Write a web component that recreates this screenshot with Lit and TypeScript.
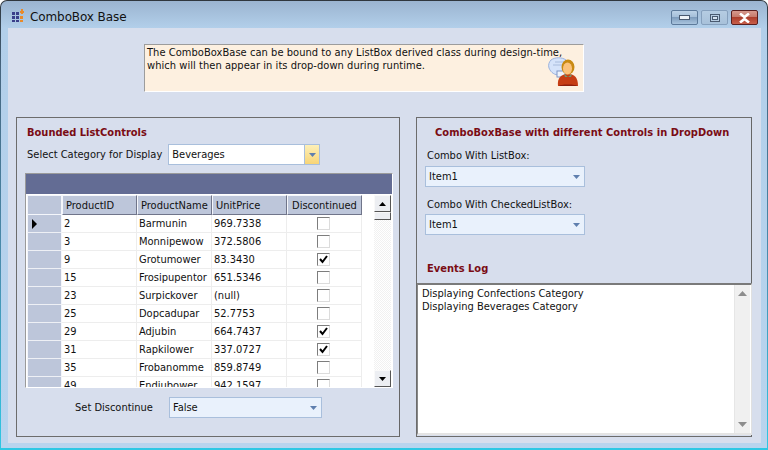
import { LitElement, html, css, svg } from "lit";
import { customElement } from "lit/decorators.js";

const rows: [string, string, string, boolean][] = [
  ["2", "Barmunin", "969.7338", false],
  ["3", "Monnipewow", "372.5806", false],
  ["9", "Grotumower", "83.3430", true],
  ["15", "Frosipupentor", "651.5346", false],
  ["23", "Surpickover", "(null)", false],
  ["25", "Dopcadupar", "52.7753", false],
  ["29", "Adjubin", "664.7437", true],
  ["31", "Rapkilower", "337.0727", true],
  ["35", "Frobanomme", "859.8749", false],
  ["49", "Endiubower", "942.1597", false],
];

const arrow = svg`<svg width="7" height="4" viewBox="0 0 7 4"><path d="M0 0h7L3.500 4z" fill="#5f7fae"/></svg>`;

@customElement("app-root")
export class AppRoot extends LitElement {
  static styles = css`
    :host { display: block; width: 768px; height: 450px; overflow: hidden; background: #fff; font-family: "DejaVu Sans Condensed", "DejaVu Sans", sans-serif; font-size: 11px; color: #111; }
    .window { box-sizing: border-box; width: 768px; height: 450px; padding: 1px 1px 2px 1px; border-radius: 7px 7px 0 0; background: linear-gradient(#2f363d 0, #46657f 15%, #4a8fb0 60%, #2ec8e4 100%); }
    .frame { height: 100%; display: flex; flex-direction: column; border-radius: 6px 6px 0 0; background: linear-gradient(#9bb4d0 0, #b2cfea 27px, #b8d4ee 100%); overflow: hidden; }
    .title { box-sizing: border-box; flex: none; height: 27px; display: flex; align-items: center; padding: 2px 9px 0 11px; gap: 6px; }
    .title .text { flex: 1; color: #111; font-family: "DejaVu Sans", sans-serif; font-size: 12px; letter-spacing: -0.1px; padding-top: 2px; }
    .btns { display: flex; gap: 3px; align-self: flex-start; padding-top: 7px; }
    .btn { box-sizing: border-box; width: 27px; height: 15px; border: 1px solid #5d7a9b; border-radius: 2px; background: linear-gradient(#bcd2e7 0, #a5bfd9 45%, #7f9dbd 50%, #a9c4de 100%); display: flex; align-items: center; justify-content: center; }
    .btn.max { background: linear-gradient(#b5cce2 0, #a8c1da 100%); border-color: #86a0bd; }
    .btn.close { border-color: #5a1f1f; background: linear-gradient(#d79a8e 0, #c67a6b 45%, #ad3f2d 50%, #c85f4a 100%); }
    .outer { flex: 1; display: flex; margin: 0 6px 5px 7px; background: #d7deed; flex-direction: column; min-height: 0; }
    .banner { box-sizing: border-box; align-self: flex-start; margin: 16px 0 0 136px; width: 440px; height: 48px; background: #fdf0e0; border-top: 1px solid #9c9c9c; border-left: 1px solid #9c9c9c; border-right: 1px solid #fff; border-bottom: 1px solid #fff; padding: 1px 2px; line-height: 13px; letter-spacing: 0.05px; position: relative; }
    .banner svg { position: absolute; left: 402px; top: 12px; }
    .panels { display: flex; gap: 16px; margin: 25px 8px 0 8px; }
    .panel { box-sizing: border-box; height: 320px; border: 1px solid #6c6c6c; border-right-color: #666; position: relative; display: flex; flex-direction: column; }
    .left { width: 384px; padding: 0 6px 0 8px; }
    .right { width: 336px; padding: 0 0 0 8px; }
    h3 { margin: 0; font-size: 11px; line-height: 14px; color: #7a0c14; font-weight: 700; }
    .left h3 { padding: 8px 0 0 2px; }
    .right h3.top { padding: 8px 0 0 10px; letter-spacing: 0.05px; }
    .row { display: flex; align-items: center; }
    .sel-row { margin-top: 4px; height: 21px; gap: 6px; padding-left: 2px; }
    .combo { box-sizing: border-box; height: 21px; border: 1px solid #a9bfdc; background: #e9f1fc; display: flex; align-items: center; padding: 0 4px 0 3px; }
    .combo span { flex: 1; }
    .combo.white { background: #fff; width: 152px; padding: 0 0 0 3px; }
    .dd { align-self: stretch; width: 14px; background: linear-gradient(#fdf0b8, #f7d477); border-left: 1px solid #a9bfdc; display: flex; align-items: center; justify-content: center; }
    .combo .ar { display: flex; }
    .combo.wide { width: 160px; }
    .combo.set { width: 153px; }
    .grid { box-sizing: border-box; margin: 8px 0 0 0; width: 368px; height: 215px; border: 1px solid #9a9a9a; border-right-color: #fff; border-bottom-color: #fff; background: #fff; overflow: hidden; position: relative; }
    .cap { height: 20px; background: #636c94; }
    .body { display: grid; grid-template-columns: 36px 75px 75px 75px 75px 1fr; grid-template-rows: 20px; grid-auto-rows: 18px; padding-top: 1px; background: #fff; }
    .h { box-sizing: border-box; background: #bdc6da; border: 1px solid #f4f6fb; border-right-color: #70758a; border-bottom-color: #70758a; display: flex; align-items: center; padding-left: 3px; }
    .h.dc { justify-content: center; padding: 0; }
    .h.blank { border-color: #f4f6fb; margin-left: 1px; }
    .rh { background: #bdc6da; border: 1px solid #f4f6fb; border-top: none; margin-left: 1px; box-sizing: border-box; border-bottom: 1px solid #eef0f5; display: flex; align-items: center; padding-left: 3px; }
    .c { border-right: 1px solid #ededed; border-bottom: 1px solid #ededed; padding-left: 2px; display: flex; align-items: center; box-sizing: border-box; color: #111; }
    .c.ck { justify-content: center; padding: 0 1px 0 0; }
    .cb { box-sizing: border-box; width: 13px; height: 13px; border: 1px solid #7d7d7d; border-right-color: #dcdcdc; border-bottom-color: #dcdcdc; display: flex; background: #fff; }
    .hole { background: #fff; }
    .sb { position: absolute; left: 348px; top: 21px; width: 17px; height: 192px; display: flex; flex-direction: column; background: repeating-conic-gradient(#f1f1f1 0 25%, #fff 0 50%) 0 0 / 2px 2px; }
    .sb .b { box-sizing: border-box; width: 17px; height: 17px; background: #eceef2; border: 1px solid #f9f9f9; border-right-color: #555; border-bottom-color: #555; display: flex; align-items: center; justify-content: center; }
    .sb .thumb { box-sizing: border-box; height: 8px; background: #eceef2; border: 1px solid #f9f9f9; border-right-color: #555; border-bottom-color: #555; }
    .sb .sp { flex: 1; }
    .set-row { padding-left: 50px; margin-top: 9px; gap: 16px; }
    .col { display: flex; flex-direction: column; }
    .lbl { line-height: 14px; padding-left: 2px; }
    .gap1 { margin-top: 9px; }
    .gap2 { margin-top: 11px; }
    .gap3 { margin-top: 3px; }
    .gap4 { margin-top: 2px; }
    .ev { margin-top: 27px; padding-left: 2px; }
    .log { box-sizing: border-box; margin: 7px 0 0 -8px; width: 335px; height: 152px; background: #fff; border: 2px solid #7a7a7a; border-right: 1px solid #e0e0e0; border-left: 1px solid #888; border-bottom: 2px solid #e4e4e4; padding: 2px 3px 2px 4px; line-height: 13px; position: relative; }
    .lsb { position: absolute; right: 1px; top: 0; bottom: 0; width: 16px; background: #f0f0f0; border-left: 1px solid #e6e6e6; display: flex; flex-direction: column; justify-content: space-between; align-items: center; padding: 6px 0; box-sizing: border-box; }
  `;

  combo(text: string, cls: string) {
    return html`<div class="combo ${cls}"><span>${text}</span><div class="ar">${arrow}</div></div>`;
  }

  render() {
    return html`<div class="window"><div class="frame">
      <div class="title">
        <svg width="12" height="13" viewBox="0 0 12 13"><g fill="#3a3f8a"><rect x="0" y="3" width="3" height="3"/><rect x="4" y="3" width="3" height="3"/><rect x="0" y="7" width="3" height="3"/><rect x="4" y="7" width="3" height="3"/><rect x="0" y="11" width="3" height="2"/><rect x="4" y="11" width="3" height="2"/></g><g fill="#e88a2a"><rect x="8" y="7" width="3" height="3"/><rect x="8" y="11" width="3" height="2"/><path d="M9 0h2v2h1v2h-1v1H9V4H8V2h1z"/></g></svg>
        <div class="text">ComboBox Base</div>
        <div class="btns">
          <div class="btn"><svg width="11" height="5"><rect x=".5" y=".5" width="10" height="4" fill="#eef3f8" stroke="#4a5a70"/></svg></div>
          <div class="btn max"><svg width="10" height="8"><rect x=".5" y=".5" width="9" height="7" fill="#b8cde2" stroke="#4a5a70"/><rect x="2.500" y="2.500" width="5" height="3" fill="#d7e3f0" stroke="#4a5a70"/></svg></div>
          <div class="btn close"><svg width="13" height="10" viewBox="0 0 13 10"><path d="M2 0.500l4.500 3.500L11 0.500M2 9.500l4.500-3.500L11 9.500" fill="none" stroke="#fff" stroke-width="2.600"/></svg></div>
        </div>
      </div>
      <div class="outer">
        <div class="banner">The ComboBoxBase can be bound to any ListBox derived class during design-time,<br>which will then appear in its drop-down during runtime.
          <svg width="34" height="32" viewBox="0 0 34 32">
            <path d="M4 3C8 0 15 0 19 3c3 3 2 9-1 11l1 9-7-5C8 18 4 16 2 11 1 8 2 5 4 3z" fill="#d5e3fa" stroke="#9bb2dc"/>
            <path d="M8 5h9M6 8h10" stroke="#a9bcdc"/>
            <rect x="10" y="14" width="8" height="6" fill="#eef3fc" stroke="#7f96c4"/>
            <path d="M11 29c-1-8 3-12 10-12s10 4 10 12z" fill="#c63d14"/>
            <path d="M12 29c0-2 18-2 18 0z" fill="#8e1f0c"/>
            <path d="M17 17l4 3 4-3-1 3h-6z" fill="#6f9a72"/>
            <ellipse cx="21" cy="10" rx="6.500" ry="7.500" fill="#c98a12"/>
            <ellipse cx="20.500" cy="11.500" rx="4.500" ry="6" fill="#fbc27c"/>
          </svg>
        </div>
        <div class="panels">
          <div class="panel left">
            <h3>Bounded ListControls</h3>
            <div class="row sel-row"><span>Select Category for Display</span>
              <div class="combo white"><span>Beverages</span><div class="dd"><svg width="7" height="4" viewBox="0 0 7 4"><path d="M0 0h7L3.500 4z" fill="#5f7fae"/></svg></div></div>
            </div>
            <div class="grid">
              <div class="cap"></div>
              <div class="body">
                <div class="h blank"></div><div class="h">ProductID</div><div class="h">ProductName</div><div class="h">UnitPrice</div><div class="h dc">Discontinued</div><div class="hole"></div>
                ${rows.map((r, i) => html`
                  <div class="rh">${i === 0 ? html`<svg width="7" height="10" viewBox="0 0 7 10"><path d="M1 0l5 5-5 5z" fill="#000"/></svg>` : ""}</div>
                  <div class="c">${r[0]}</div><div class="c">${r[1]}</div><div class="c">${r[2]}</div>
                  <div class="c ck"><div class="cb">${r[3] ? html`<svg width="11" height="11" viewBox="0 0 11 11"><path d="M2 5l2.500 3L9 2" fill="none" stroke="#000" stroke-width="2"/></svg>` : ""}</div></div>
                  <div class="hole"></div>`)}
              </div>
              <div class="sb">
                <div class="b"><svg width="7" height="4" viewBox="0 0 7 4"><path d="M0 4h7L3.500 0z" fill="#000"/></svg></div>
                <div class="thumb"></div><div class="sp"></div>
                <div class="b"><svg width="7" height="4" viewBox="0 0 7 4"><path d="M0 0h7L3.500 4z" fill="#000"/></svg></div>
              </div>
            </div>
            <div class="row set-row"><span>Set Discontinue</span>${this.combo("False", "set")}</div>
          </div>
          <div class="panel right">
            <h3 class="top">ComboBoxBase with different Controls in DropDown</h3>
            <div class="col">
              <div class="lbl gap1">Combo With ListBox:</div>
              <div class="gap3">${this.combo("Item1", "wide")}</div>
              <div class="lbl gap2">Combo With CheckedListBox:</div>
              <div class="gap4">${this.combo("Item1", "wide")}</div>
              <h3 class="ev">Events Log</h3>
              <div class="log">Displaying Confections Category<br>Displaying Beverages Category
                <div class="lsb">
                  <svg width="9" height="5" viewBox="0 0 9 5"><path d="M0 5h9L4.500 0z" fill="#8d8d8d"/></svg>
                  <svg width="9" height="5" viewBox="0 0 9 5"><path d="M0 0h9L4.500 5z" fill="#8d8d8d"/></svg>
                </div>
              </div>
            </div>
          </div>
        </div>
      </div>
    </div></div>`;
  }
}
